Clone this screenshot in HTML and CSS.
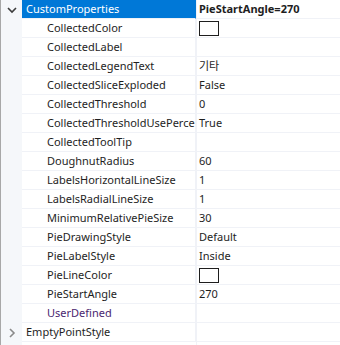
FILE: index.html
```html
<!DOCTYPE html>
<html>
<head>
<meta charset="utf-8">
<link rel="stylesheet" href="styles.css">
</head>
<body>
<div class="grid">
  <div class="row selected">
    <div class="gutter"><svg class="chev" width="10" height="8" viewBox="0 0 10 8"><path d="M1 2 L5 6 L9 2" fill="none" stroke="#3c3c3c" stroke-width="1.6"/></svg></div>
    <div class="name top">CustomProperties</div>
    <div class="value bold">PieStartAngle=270</div>
  </div>
  <div class="row"><div class="gutter"></div><div class="name">CollectedColor</div><div class="value"><span class="swatch"></span></div></div>
  <div class="row"><div class="gutter"></div><div class="name">CollectedLabel</div><div class="value"></div></div>
  <div class="row"><div class="gutter"></div><div class="name">CollectedLegendText</div><div class="value">기타</div></div>
  <div class="row"><div class="gutter"></div><div class="name">CollectedSliceExploded</div><div class="value">False</div></div>
  <div class="row"><div class="gutter"></div><div class="name">CollectedThreshold</div><div class="value">0</div></div>
  <div class="row"><div class="gutter"></div><div class="name">CollectedThresholdUsePercent</div><div class="value">True</div></div>
  <div class="row"><div class="gutter"></div><div class="name">CollectedToolTip</div><div class="value"></div></div>
  <div class="row"><div class="gutter"></div><div class="name">DoughnutRadius</div><div class="value">60</div></div>
  <div class="row"><div class="gutter"></div><div class="name">LabelsHorizontalLineSize</div><div class="value">1</div></div>
  <div class="row"><div class="gutter"></div><div class="name">LabelsRadialLineSize</div><div class="value">1</div></div>
  <div class="row"><div class="gutter"></div><div class="name">MinimumRelativePieSize</div><div class="value">30</div></div>
  <div class="row"><div class="gutter"></div><div class="name">PieDrawingStyle</div><div class="value">Default</div></div>
  <div class="row"><div class="gutter"></div><div class="name">PieLabelStyle</div><div class="value">Inside</div></div>
  <div class="row"><div class="gutter"></div><div class="name">PieLineColor</div><div class="value"><span class="swatch"></span></div></div>
  <div class="row"><div class="gutter"></div><div class="name">PieStartAngle</div><div class="value">270</div></div>
  <div class="row"><div class="gutter"></div><div class="name user">UserDefined</div><div class="value"></div></div>
  <div class="row">
    <div class="gutter"><svg class="chev" width="8" height="10" viewBox="0 0 8 10"><path d="M2 1 L6 5 L2 9" fill="none" stroke="#8a8a8a" stroke-width="1.6"/></svg></div>
    <div class="name top">EmptyPointStyle</div>
    <div class="value"></div>
  </div>
</div>
</body>
</html>
```
FILE: styles.css
```css
html, body {
  margin: 0;
  padding: 0;
  background: #ffffff;
}
body {
  font-family: "Noto Sans", "Noto Sans CJK KR", sans-serif;
  font-size: 11px;
  color: #1e1e1e;
  width: 340px;
  height: 345px;
  overflow: hidden;
}
.grid {
  display: flex;
  flex-direction: column;
  border-left: 1px solid #a8a8a8;
  height: 345px;
  overflow: hidden;
  background: linear-gradient(to right, #f5f7fa 21px, #ffffff 21px 195px, #f0f2f7 195px 196px, #ffffff 196px);
}
.row {
  display: flex;
  height: 19px;
  flex: none;
}
.gutter {
  width: 21px;
  flex: none;
  display: flex;
  align-items: center;
  justify-content: center;
  background: #f5f7fa;
}
.name {
  width: 174px;
  flex: none;
  box-sizing: border-box;
  padding-left: 25px;
  line-height: 18px;
  white-space: nowrap;
  overflow: hidden;
  border-bottom: 1px solid #f0f2f7;
  border-right: 1px solid #f0f2f7;
}
.name.top {
  padding-left: 4px;
}
.name.user {
  color: #4a2670;
}
.value {
  flex: 1;
  padding-left: 3px;
  line-height: 18px;
  white-space: nowrap;
  overflow: hidden;
  border-bottom: 1px solid #f0f2f7;
  display: flex;
  align-items: center;
}
.bold {
  font-weight: bold;
}
.selected .name {
  background: #0078d7;
  color: #ffffff;
  border-right-color: #0078d7;
}
.swatch {
  display: block;
  width: 18px;
  height: 13px;
  border: 1px solid #1e1e1e;
  background: #ffffff;
}
```
